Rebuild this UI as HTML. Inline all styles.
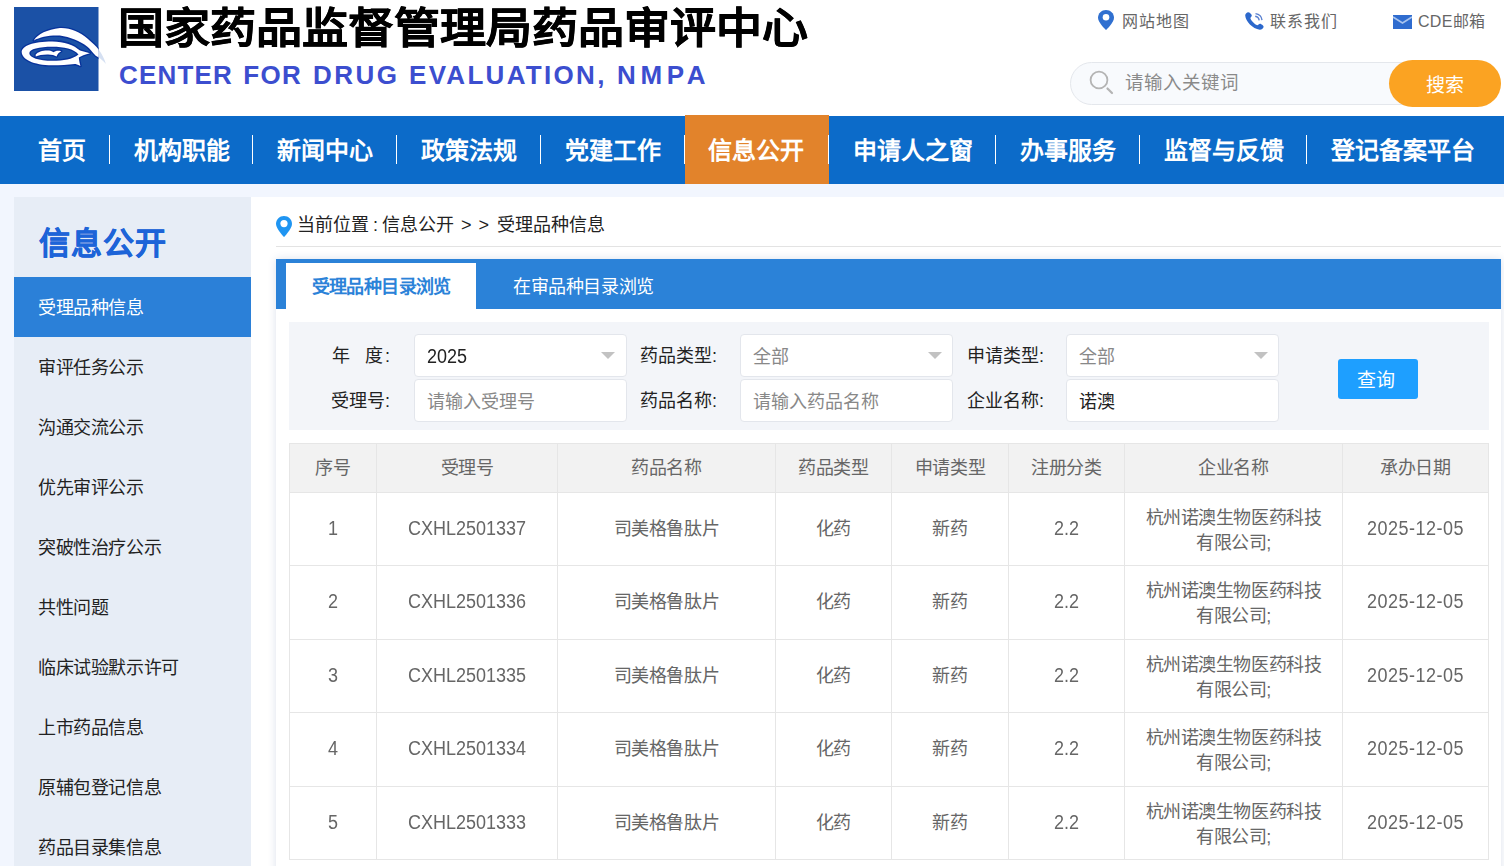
<!DOCTYPE html><html lang="zh-CN"><head><meta charset="utf-8"><title>受理品种信息</title><style>
*{margin:0;padding:0;box-sizing:border-box;}
html,body{width:1504px;height:866px;overflow:hidden;background:#fff;}
body{position:relative;font-family:"Liberation Sans",sans-serif;color:#333;}
.a{position:absolute;white-space:nowrap;}
.num{display:inline-block;transform:scaleY(1.12);transform-origin:50% 60%;letter-spacing:0;}
.ni{position:absolute;top:116px;height:68px;line-height:68px;font-size:24px;font-weight:bold;color:#fff;white-space:nowrap;}
.sep{position:absolute;top:135px;width:1px;height:29px;background:#fff;}
.si{position:absolute;left:14px;width:237px;height:60px;line-height:60px;padding-left:24px;font-size:18px;letter-spacing:-0.4px;color:#222;white-space:nowrap;}
.tl{font-size:16px;letter-spacing:1px;line-height:20px;color:#666;top:11.5px;}
.lab{font-size:18px;line-height:24px;color:#222;}
.inp{position:absolute;width:213px;height:43px;background:#fff;border:1px solid #e3e6ec;border-radius:4px;font-size:18px;line-height:44px;padding-left:12px;white-space:nowrap;}
.tri{position:absolute;width:0;height:0;border-left:7px solid transparent;border-right:7px solid transparent;border-top:7px solid #c2c2c2;}
.hl{position:absolute;height:1px;background:#e6e6e6;}
.vl{position:absolute;width:1px;background:#e6e6e6;}
.c{position:absolute;display:flex;align-items:center;justify-content:center;text-align:center;font-size:18px;color:#666;line-height:25px;letter-spacing:-0.45px;}
.hc{color:#666;}
</style></head><body>
<svg class="a" style="left:14px;top:7px" width="96" height="84" viewBox="0 0 96 84">
<defs><filter id="bl" x="-20%" y="-20%" width="140%" height="140%"><feGaussianBlur stdDeviation="0.7"/></filter><filter id="bl2" x="-20%" y="-20%" width="140%" height="140%"><feGaussianBlur stdDeviation="0.35"/></filter>
<clipPath id="sq"><rect x="0" y="0" width="84.5" height="84"/></clipPath>
<clipPath id="out"><rect x="84.5" y="0" width="12" height="84"/></clipPath></defs>
<rect x="0" y="0" width="84.5" height="84" fill="#1b51a6"/>
<g clip-path="url(#sq)" filter="url(#bl)" fill="none" stroke="#07329a" stroke-width="2.6" stroke-linejoin="round">
<path d="M19.8 33.4 C24 27 33 22.5 45.9 21 C56 20.5 66 25 73.4 31.5 C78 35.5 82 39 85 43 C88 47 90.5 52 91.9 57 C88.5 53 85 50.5 81.7 48.7 C78.5 45.5 76 42 73.4 39.8 C66 34 56 30 45.9 28.6 C36 28 26 30 19.8 33.4 Z"/><path fill-rule="evenodd" d="M7.7 45 C7.7 39 19 34.4 38.3 34.4 C50 34.4 60 38 66 43.5 L75.9 46.2 C71 47.5 67 49 64.8 50.5 C65 53.5 65.8 56.5 66.4 59 C63.5 57.5 62 57 60.6 57 C54 58 46 58.3 38.3 58.3 C19 58.3 7.7 52 7.7 45 Z M15.3 46.2 C15.3 50.5 25 53.8 38.3 53.8 C50 53.8 58 52.5 64.5 47.5 C60 42 50 39.8 38.3 39.8 C25 39.8 15.3 42 15.3 46.2 Z"/><path d="M21.7 47.5 C24 44.5 30 43 35 43.5 C37 43.8 38.5 44.5 39.5 45.2 C41 44 44 43.2 47.2 44.2 C45 45.3 43.5 47 42.5 49.4 C40.5 48.2 38 47.5 34 47.4 C29 47.3 24.5 48 21.7 49.6 Z"/>
</g>
<g clip-path="url(#sq)" filter="url(#bl2)">
<path fill="#fff" d="M19.8 33.4 C24 27 33 22.5 45.9 21 C56 20.5 66 25 73.4 31.5 C78 35.5 82 39 85 43 C88 47 90.5 52 91.9 57 C88.5 53 85 50.5 81.7 48.7 C78.5 45.5 76 42 73.4 39.8 C66 34 56 30 45.9 28.6 C36 28 26 30 19.8 33.4 Z"/>
<path fill="#fff" fill-rule="evenodd" d="M7.7 45 C7.7 39 19 34.4 38.3 34.4 C50 34.4 60 38 66 43.5 L75.9 46.2 C71 47.5 67 49 64.8 50.5 C65 53.5 65.8 56.5 66.4 59 C63.5 57.5 62 57 60.6 57 C54 58 46 58.3 38.3 58.3 C19 58.3 7.7 52 7.7 45 Z M15.3 46.2 C15.3 50.5 25 53.8 38.3 53.8 C50 53.8 58 52.5 64.5 47.5 C60 42 50 39.8 38.3 39.8 C25 39.8 15.3 42 15.3 46.2 Z"/>
<path fill="#fff" d="M21.7 47.5 C24 44.5 30 43 35 43.5 C37 43.8 38.5 44.5 39.5 45.2 C41 44 44 43.2 47.2 44.2 C45 45.3 43.5 47 42.5 49.4 C40.5 48.2 38 47.5 34 47.4 C29 47.3 24.5 48 21.7 49.6 Z"/>
</g>
<path clip-path="url(#out)" fill="#d5e0f2" d="M19.8 33.4 C24 27 33 22.5 45.9 21 C56 20.5 66 25 73.4 31.5 C78 35.5 82 39 85 43 C88 47 90.5 52 91.9 57 C88.5 53 85 50.5 81.7 48.7 C78.5 45.5 76 42 73.4 39.8 C66 34 56 30 45.9 28.6 C36 28 26 30 19.8 33.4 Z"/>
</svg>
<div class="a" style="left:117.5px;top:-4px;font-size:46px;line-height:62px;font-weight:bold;color:#000;-webkit-text-stroke:0.5px #000;transform:scaleY(0.92);transform-origin:0 52px">国家药品监督管理局药品审评中心</div>
<div class="a" style="left:119px;top:60px;font-size:26px;line-height:30px;font-weight:bold;color:#3c4ecf;letter-spacing:1.2px">CENTER</div>
<div class="a" style="left:243.3px;top:60px;font-size:26px;line-height:30px;font-weight:bold;color:#3c4ecf;letter-spacing:1.25px">FOR</div>
<div class="a" style="left:313px;top:60px;font-size:26px;line-height:30px;font-weight:bold;color:#3c4ecf;letter-spacing:2.47px">DRUG</div>
<div class="a" style="left:409px;top:60px;font-size:26px;line-height:30px;font-weight:bold;color:#3c4ecf;letter-spacing:2.3px">EVALUATION,</div>
<div class="a" style="left:617px;top:60px;font-size:26px;line-height:30px;font-weight:bold;color:#3c4ecf;letter-spacing:4.67px">NMPA</div>
<svg class="a" style="left:1098px;top:10px" width="16" height="20" viewBox="0 0 16 20"><path fill="#3070d0" d="M8 0C3.6 0 0 3.4 0 7.7 0 12.5 8 20 8 20s8-7.5 8-12.3C16 3.4 12.4 0 8 0z"/><circle cx="8" cy="7.2" r="3.3" fill="#fff"/></svg>
<svg class="a" style="left:1245px;top:12px" width="19" height="18" viewBox="0 0 19 18"><path fill="#2c68cc" d="M3.2 0.3 C2 0.3 0.2 1.8 0.2 3.6 C0.6 9.5 7.5 16.8 14.8 17.8 C16.8 17.8 18.6 16 18.6 14.7 C18.6 13.8 16 11.8 15 11.8 C14 11.8 13.2 13.2 12.2 13.2 C9.8 12.4 6 8.6 5.4 6.2 C5.4 5.3 6.8 4.5 6.8 3.5 C6.8 2.5 4.6 0.3 3.2 0.3 Z"/><path fill="none" stroke="#5a80d0" stroke-width="1.4" d="M10.5 1.6 A7.5 7.5 0 0 1 17 8.2 M10.2 4.3 A4.8 4.8 0 0 1 14.2 8.4"/></svg>
<svg class="a" style="left:1393px;top:15px" width="19" height="14" viewBox="0 0 19 14"><rect x="0" y="0" width="19" height="14" fill="#2f6ccf"/><path d="M0 2 L9.5 8 L19 2" fill="none" stroke="#a9c4ee" stroke-width="1.6"/></svg>
<div class="a tl" style="left:1122px">网站地图</div>
<div class="a tl" style="left:1270px">联系我们</div>
<div class="a tl" style="left:1418px;letter-spacing:0.3px">CDE邮箱</div>
<div class="a" style="left:1070px;top:62px;width:430px;height:43px;border:1px solid #e4e7ec;border-radius:22px;background:#f8fafd"></div>
<svg class="a" style="left:1088px;top:68px" width="26" height="27" viewBox="0 0 26 27"><circle cx="11" cy="12" r="8.4" fill="none" stroke="#b4b4b4" stroke-width="1.8"/><path d="M19.5 20.5 L24 25" stroke="#b4b4b4" stroke-width="2.2" stroke-linecap="round"/></svg>
<div class="a" style="left:1125px;top:71px;font-size:18.5px;line-height:24px;color:#8a8a8a">请输入关键词</div>
<div class="a" style="left:1389px;top:60px;width:112px;height:47px;border-radius:24px;background:#fba322;color:#fff;font-size:19px;line-height:51px;text-align:center">搜索</div>
<div class="a" style="left:0;top:116px;width:1504px;height:68px;background:#0c6bc9"></div>
<div class="a" style="left:685px;top:115px;width:144px;height:69px;background:#e2832b"></div>
<div class="ni" style="left:38px;top:117px">首页</div>
<div class="ni" style="left:134px;top:117px">机构职能</div>
<div class="ni" style="left:277px;top:117px">新闻中心</div>
<div class="ni" style="left:421px;top:117px">政策法规</div>
<div class="ni" style="left:565px;top:117px">党建工作</div>
<div class="ni" style="left:708px;top:117px">信息公开</div>
<div class="ni" style="left:853px;top:117px">申请人之窗</div>
<div class="ni" style="left:1020px;top:117px">办事服务</div>
<div class="ni" style="left:1164px;top:117px">监督与反馈</div>
<div class="ni" style="left:1331px;top:117px">登记备案平台</div>
<div class="sep" style="left:109px"></div>
<div class="sep" style="left:252px"></div>
<div class="sep" style="left:396px"></div>
<div class="sep" style="left:540px"></div>
<div class="sep" style="left:684px"></div>
<div class="sep" style="left:828px"></div>
<div class="sep" style="left:995px"></div>
<div class="sep" style="left:1139px"></div>
<div class="sep" style="left:1306px"></div>
<div class="a" style="left:0;top:184px;width:1504px;height:682px;background:#f2f6fe"></div>
<div class="a" style="left:14px;top:197px;width:237px;height:669px;background:#e7edf6"></div>
<div class="a" style="left:38.5px;top:223.5px;font-size:31px;line-height:40px;letter-spacing:1.2px;font-weight:bold;color:#1d64d8;-webkit-text-stroke:0.4px #1d64d8">信息公开</div>
<div class="si" style="top:277px;line-height:62px;background:#2b80d8;color:#fff">受理品种信息</div>
<div class="si" style="top:338px;line-height:60px">审评任务公示</div>
<div class="si" style="top:398px;line-height:60px">沟通交流公示</div>
<div class="si" style="top:458px;line-height:60px">优先审评公示</div>
<div class="si" style="top:518px;line-height:60px">突破性治疗公示</div>
<div class="si" style="top:578px;line-height:60px">共性问题</div>
<div class="si" style="top:638px;line-height:60px">临床试验默示许可</div>
<div class="si" style="top:698px;line-height:60px">上市药品信息</div>
<div class="si" style="top:758px;line-height:60px">原辅包登记信息</div>
<div class="si" style="top:818px;line-height:60px">药品目录集信息</div>
<div class="a" style="left:251px;top:197px;width:1253px;height:669px;background:#fff"></div>
<svg class="a" style="left:276px;top:216px" width="16" height="21" viewBox="0 0 16 21"><path fill="#1f95f2" d="M8 0C3.6 0 0 3.5 0 7.9 0 12.6 8 21 8 21s8-8.4 8-13.1C16 3.5 12.4 0 8 0z"/><circle cx="8" cy="7.6" r="3.6" fill="#fff"/></svg>
<div class="a" style="left:297px;top:213px;font-size:18px;line-height:24px;color:#222">当前位置</div>
<div class="a" style="left:373px;top:213px;font-size:18px;line-height:24px;color:#222">:</div>
<div class="a" style="left:381.5px;top:213px;font-size:18px;line-height:24px;color:#222">信息公开</div>
<div class="a" style="left:461px;top:213px;font-size:18px;line-height:24px;color:#222">&gt;</div>
<div class="a" style="left:478.5px;top:213px;font-size:18px;line-height:24px;color:#222">&gt;</div>
<div class="a" style="left:497px;top:213px;font-size:18px;line-height:24px;color:#222">受理品种信息</div>
<div class="a" style="left:276px;top:246px;width:1225px;height:1px;background:#e3e3e3"></div>
<div class="a" style="left:276px;top:259px;width:1225px;height:640px;background:#fff;box-shadow:0 0 8px rgba(40,80,140,0.17)"></div>
<div class="a" style="left:276px;top:259px;width:1225px;height:50px;background:#2b82d8"></div>
<div class="a" style="left:286px;top:263px;width:190px;height:46px;background:#fff"></div>
<div class="a" style="left:311.5px;top:275px;font-size:18px;letter-spacing:-0.6px;line-height:24px;color:#2b82d8;font-weight:bold">受理品种目录浏览</div>
<div class="a" style="left:513px;top:275px;font-size:18px;letter-spacing:-0.4px;line-height:24px;color:#fff">在审品种目录浏览</div>
<div class="a" style="left:289px;top:322px;width:1200px;height:108px;background:#f3f5f9"></div>
<div class="a lab" style="left:332px;top:344px">年&nbsp;&nbsp;&nbsp;度<span style="margin-left:2px">:</span></div>
<div class="a lab" style="left:331px;top:389px">受理号:</div>
<div class="a lab" style="left:640px;top:344px">药品类型:</div>
<div class="a lab" style="left:640px;top:389px">药品名称:</div>
<div class="a lab" style="left:967px;top:344px">申请类型:</div>
<div class="a lab" style="left:967px;top:389px">企业名称:</div>
<div class="inp" style="left:414px;top:334px;color:#222;width:212.5px"><span class="num">2025</span></div>
<div class="tri" style="left:601px;top:352px"></div>
<div class="inp" style="left:414px;top:379px;color:#888;width:212.5px">请输入受理号</div>
<div class="inp" style="left:740px;top:334px;color:#888;width:213px">全部</div>
<div class="tri" style="left:928px;top:352px"></div>
<div class="inp" style="left:740px;top:379px;color:#888;width:213px">请输入药品名称</div>
<div class="inp" style="left:1066px;top:334px;color:#888;width:213px">全部</div>
<div class="tri" style="left:1254px;top:352px"></div>
<div class="inp" style="left:1066px;top:379px;color:#222;width:213px">诺澳</div>
<div class="a" style="left:1338px;top:359px;width:80px;height:40px;background:#1e9fff;color:#fff;font-size:19px;line-height:43px;text-indent:-5px;text-align:center;border-radius:3px">查询</div>
<div class="a" style="left:289px;top:443px;width:1200px;height:49px;background:#f2f2f2"></div>
<div class="hl" style="left:289px;top:443px;width:1200px"></div>
<div class="hl" style="left:289px;top:492px;width:1200px"></div>
<div class="hl" style="left:289px;top:565px;width:1200px"></div>
<div class="hl" style="left:289px;top:639px;width:1200px"></div>
<div class="hl" style="left:289px;top:712px;width:1200px"></div>
<div class="hl" style="left:289px;top:786px;width:1200px"></div>
<div class="hl" style="left:289px;top:859px;width:1200px"></div>
<div class="vl" style="left:289px;top:443px;height:417px"></div>
<div class="vl" style="left:376px;top:443px;height:417px"></div>
<div class="vl" style="left:557px;top:443px;height:417px"></div>
<div class="vl" style="left:775px;top:443px;height:417px"></div>
<div class="vl" style="left:891px;top:443px;height:417px"></div>
<div class="vl" style="left:1008px;top:443px;height:417px"></div>
<div class="vl" style="left:1124px;top:443px;height:417px"></div>
<div class="vl" style="left:1342px;top:443px;height:417px"></div>
<div class="vl" style="left:1488px;top:443px;height:417px"></div>
<div class="c hc" style="left:290px;top:444px;width:86px;height:48px">序号</div>
<div class="c hc" style="left:377px;top:444px;width:180px;height:48px">受理号</div>
<div class="c hc" style="left:558px;top:444px;width:217px;height:48px">药品名称</div>
<div class="c hc" style="left:776px;top:444px;width:115px;height:48px">药品类型</div>
<div class="c hc" style="left:892px;top:444px;width:116px;height:48px">申请类型</div>
<div class="c hc" style="left:1009px;top:444px;width:115px;height:48px">注册分类</div>
<div class="c hc" style="left:1125px;top:444px;width:217px;height:48px">企业名称</div>
<div class="c hc" style="left:1343px;top:444px;width:145px;height:48px">承办日期</div>
<div class="c" style="left:290px;top:493px;width:86px;height:72px"><span class="num">1</span></div>
<div class="c" style="left:377px;top:493px;width:180px;height:72px"><span class="num">CXHL2501337</span></div>
<div class="c" style="left:558px;top:493px;width:217px;height:72px">司美格鲁肽片</div>
<div class="c" style="left:776px;top:493px;width:115px;height:72px">化药</div>
<div class="c" style="left:892px;top:493px;width:116px;height:72px">新药</div>
<div class="c" style="left:1009px;top:493px;width:115px;height:72px"><span class="num">2.2</span></div>
<div class="c" style="left:1125px;top:493px;width:217px;height:72px"><span style="position:relative;top:1.5px">杭州诺澳生物医药科技<br>有限公司;</span></div>
<div class="c" style="left:1343px;top:493px;width:145px;height:72px"><span class="num" style="letter-spacing:0.5px">2025-12-05</span></div>
<div class="c" style="left:290px;top:566px;width:86px;height:73px"><span class="num">2</span></div>
<div class="c" style="left:377px;top:566px;width:180px;height:73px"><span class="num">CXHL2501336</span></div>
<div class="c" style="left:558px;top:566px;width:217px;height:73px">司美格鲁肽片</div>
<div class="c" style="left:776px;top:566px;width:115px;height:73px">化药</div>
<div class="c" style="left:892px;top:566px;width:116px;height:73px">新药</div>
<div class="c" style="left:1009px;top:566px;width:115px;height:73px"><span class="num">2.2</span></div>
<div class="c" style="left:1125px;top:566px;width:217px;height:73px"><span style="position:relative;top:1.5px">杭州诺澳生物医药科技<br>有限公司;</span></div>
<div class="c" style="left:1343px;top:566px;width:145px;height:73px"><span class="num" style="letter-spacing:0.5px">2025-12-05</span></div>
<div class="c" style="left:290px;top:640px;width:86px;height:72px"><span class="num">3</span></div>
<div class="c" style="left:377px;top:640px;width:180px;height:72px"><span class="num">CXHL2501335</span></div>
<div class="c" style="left:558px;top:640px;width:217px;height:72px">司美格鲁肽片</div>
<div class="c" style="left:776px;top:640px;width:115px;height:72px">化药</div>
<div class="c" style="left:892px;top:640px;width:116px;height:72px">新药</div>
<div class="c" style="left:1009px;top:640px;width:115px;height:72px"><span class="num">2.2</span></div>
<div class="c" style="left:1125px;top:640px;width:217px;height:72px"><span style="position:relative;top:1.5px">杭州诺澳生物医药科技<br>有限公司;</span></div>
<div class="c" style="left:1343px;top:640px;width:145px;height:72px"><span class="num" style="letter-spacing:0.5px">2025-12-05</span></div>
<div class="c" style="left:290px;top:713px;width:86px;height:73px"><span class="num">4</span></div>
<div class="c" style="left:377px;top:713px;width:180px;height:73px"><span class="num">CXHL2501334</span></div>
<div class="c" style="left:558px;top:713px;width:217px;height:73px">司美格鲁肽片</div>
<div class="c" style="left:776px;top:713px;width:115px;height:73px">化药</div>
<div class="c" style="left:892px;top:713px;width:116px;height:73px">新药</div>
<div class="c" style="left:1009px;top:713px;width:115px;height:73px"><span class="num">2.2</span></div>
<div class="c" style="left:1125px;top:713px;width:217px;height:73px"><span style="position:relative;top:1.5px">杭州诺澳生物医药科技<br>有限公司;</span></div>
<div class="c" style="left:1343px;top:713px;width:145px;height:73px"><span class="num" style="letter-spacing:0.5px">2025-12-05</span></div>
<div class="c" style="left:290px;top:787px;width:86px;height:72px"><span class="num">5</span></div>
<div class="c" style="left:377px;top:787px;width:180px;height:72px"><span class="num">CXHL2501333</span></div>
<div class="c" style="left:558px;top:787px;width:217px;height:72px">司美格鲁肽片</div>
<div class="c" style="left:776px;top:787px;width:115px;height:72px">化药</div>
<div class="c" style="left:892px;top:787px;width:116px;height:72px">新药</div>
<div class="c" style="left:1009px;top:787px;width:115px;height:72px"><span class="num">2.2</span></div>
<div class="c" style="left:1125px;top:787px;width:217px;height:72px"><span style="position:relative;top:1.5px">杭州诺澳生物医药科技<br>有限公司;</span></div>
<div class="c" style="left:1343px;top:787px;width:145px;height:72px"><span class="num" style="letter-spacing:0.5px">2025-12-05</span></div>
</body></html>
